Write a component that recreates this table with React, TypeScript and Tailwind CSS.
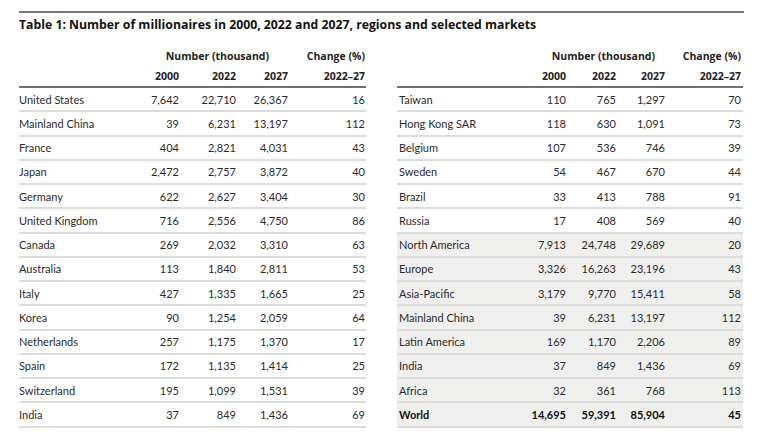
type Row = { name: string; a: string; b: string; c: string; d: string; shade?: boolean; bold?: boolean };

const left: Row[] = [
  { name: "United States", a: "7,642", b: "22,710", c: "26,367", d: "16" },
  { name: "Mainland China", a: "39", b: "6,231", c: "13,197", d: "112" },
  { name: "France", a: "404", b: "2,821", c: "4,031", d: "43" },
  { name: "Japan", a: "2,472", b: "2,757", c: "3,872", d: "40" },
  { name: "Germany", a: "622", b: "2,627", c: "3,404", d: "30" },
  { name: "United Kingdom", a: "716", b: "2,556", c: "4,750", d: "86" },
  { name: "Canada", a: "269", b: "2,032", c: "3,310", d: "63" },
  { name: "Australia", a: "113", b: "1,840", c: "2,811", d: "53" },
  { name: "Italy", a: "427", b: "1,335", c: "1,665", d: "25" },
  { name: "Korea", a: "90", b: "1,254", c: "2,059", d: "64" },
  { name: "Netherlands", a: "257", b: "1,175", c: "1,370", d: "17" },
  { name: "Spain", a: "172", b: "1,135", c: "1,414", d: "25" },
  { name: "Switzerland", a: "195", b: "1,099", c: "1,531", d: "39" },
  { name: "India", a: "37", b: "849", c: "1,436", d: "69" },
];

const right: Row[] = [
  { name: "Taiwan", a: "110", b: "765", c: "1,297", d: "70" },
  { name: "Hong Kong SAR", a: "118", b: "630", c: "1,091", d: "73" },
  { name: "Belgium", a: "107", b: "536", c: "746", d: "39" },
  { name: "Sweden", a: "54", b: "467", c: "670", d: "44" },
  { name: "Brazil", a: "33", b: "413", c: "788", d: "91" },
  { name: "Russia", a: "17", b: "408", c: "569", d: "40" },
  { name: "North America", a: "7,913", b: "24,748", c: "29,689", d: "20", shade: true },
  { name: "Europe", a: "3,326", b: "16,263", c: "23,196", d: "43", shade: true },
  { name: "Asia-Pacific", a: "3,179", b: "9,770", c: "15,411", d: "58", shade: true },
  { name: "Mainland China", a: "39", b: "6,231", c: "13,197", d: "112", shade: true },
  { name: "Latin America", a: "169", b: "1,170", c: "2,206", d: "89", shade: true },
  { name: "India", a: "37", b: "849", c: "1,436", d: "69", shade: true },
  { name: "Africa", a: "32", b: "361", c: "768", d: "113", shade: true },
  { name: "World", a: "14,695", b: "59,391", c: "85,904", d: "45", shade: true, bold: true },
];

const heading = { fontFamily: "'Open Sans', 'Noto Sans', sans-serif" };

type TableProps = { rows: Row[]; cols: string; numPad: string; edge: string; labelPad: string };

function DataTable({ rows, cols, numPad, edge, labelPad }: TableProps) {
  return (
    <div className="flex flex-col">
      <div className={`grid ${cols} h-[21px] items-center text-[10.5px] font-bold text-[#222]`} style={heading}>
        <div />
        <div className={`col-span-3 text-right ${numPad}`}>Number (thousand)</div>
        <div className={`text-right ${edge}`}>Change (%)</div>
      </div>
      <div className={`grid ${cols} h-[21px] items-center border-b-2 border-[#707070] text-[10.5px] font-bold text-[#222]`} style={heading}>
        <div />
        <div className="text-right">2000</div>
        <div className="text-right">2022</div>
        <div className="text-right">2027</div>
        <div className={`text-right ${edge}`}>2022–27</div>
      </div>
      {rows.map((r) => (
        <div
          key={r.name + r.a}
          className={`grid ${cols} h-[24.25px] items-center border-b-2 border-[#dcdcdc] ${r.shade ? "bg-[#efefed]" : ""} ${r.bold ? "font-bold text-[#111]" : "text-[#2a2a2a]"}`}
        >
          <div className={labelPad}>{r.name}</div>
          <div className="text-right">{r.a}</div>
          <div className="text-right">{r.b}</div>
          <div className="text-right">{r.c}</div>
          <div className={`text-right ${edge}`}>{r.d}</div>
        </div>
      ))}
    </div>
  );
}

export default function App() {
  return (
    <div className="h-[435px] w-[758px] bg-white pl-[19px] pt-[11px] text-[11px] leading-none" style={{ fontFamily: "Lato, 'Noto Sans', sans-serif" }}>
      <div className="w-[725px] border-t-2 border-[#777]" />
      <h1 className="mt-[6px] h-[14px] text-[12.25px] font-bold text-[#111]" style={heading}>
        Table 1: Number of millionaires in 2000, 2022 and 2027, regions and selected markets
      </h1>
      <div className="mt-[13px] flex gap-[31px]">
        <div className="w-[347px]">
          <DataTable rows={left} cols="grid-cols-[110px_50px_57px_52px_78px]" numPad="pr-[19px]" edge="pr-[1px]" labelPad="" />
        </div>
        <div className="w-[346px]">
          <DataTable rows={right} cols="grid-cols-[119px_50px_50px_49px_78px]" numPad="pr-[10px]" edge="pr-[2px]" labelPad="pl-[2px]" />
        </div>
      </div>
    </div>
  );
}
